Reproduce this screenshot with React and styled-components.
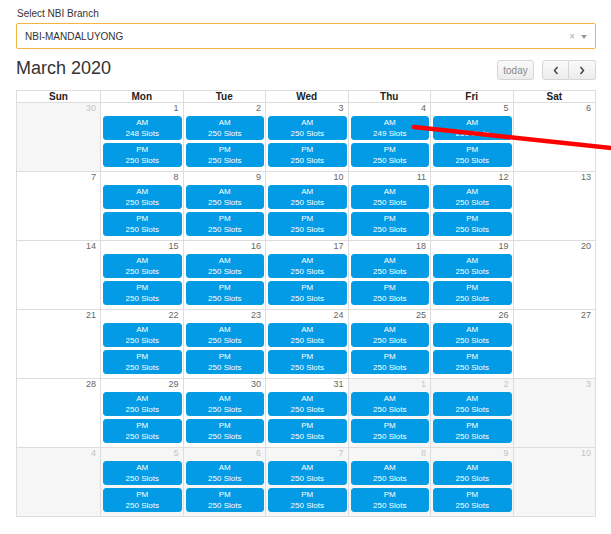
import React from "react";
import styled, { createGlobalStyle } from "styled-components";

const GlobalStyle = createGlobalStyle`
  html, body { margin: 0; padding: 0; background: #fff; }
  body { font-family: "Liberation Sans", Arial, sans-serif; color: #333; }
`;

const Page = styled.div`
  position: relative;
  width: 580px;
  padding: 8px 15px 0 16px;
  overflow: hidden;
`;

const Label = styled.div`
  font-size: 10px;
  line-height: 12px;
  color: #333;
  padding-left: 1px;
  margin-bottom: 3px;
`;

const SelectBox = styled.div`
  box-sizing: border-box;
  height: 26px;
  border: 1px solid #f5b342;
  border-radius: 2px;
  display: flex;
  align-items: center;
  padding: 0 8px;
  font-size: 10px;
  color: #333;
`;

const SelectValue = styled.span`
  flex: 1;
`;

const Clear = styled.span`
  color: #aaa;
  font-size: 10px;
  margin-right: 6px;
`;

const Caret = styled.span`
  width: 0;
  height: 0;
  border-left: 3px solid transparent;
  border-right: 3px solid transparent;
  border-top: 4px solid #999;
  margin-top: 1px;
`;

const Toolbar = styled.div`
  display: flex;
  align-items: flex-start;
  margin-top: 9px;
  height: 22px;
`;

const Title = styled.h2`
  flex: 1;
  margin: 0;
  font-size: 18px;
  line-height: 20px;
  font-weight: normal;
  color: #333;
`;

const Btn = styled.button`
  box-sizing: border-box;
  height: 20px;
  margin-top: 2px;
  padding: 0;
  width: ${(p) => (p.$wide ? "37px" : "27px")};
  font-family: "Liberation Sans", Arial, sans-serif;
  font-size: 10px;
  color: ${(p) => (p.$muted ? "#8a8a8a" : "#333")};
  background: linear-gradient(#fafafa, #ececec);
  border: 1px solid #d6d6d6;
  border-left-width: ${(p) => (p.$joined ? "0" : "1px")};
  border-radius: ${(p) => p.$radius || "3px"};
  display: flex;
  align-items: center;
  justify-content: center;
  cursor: pointer;
`;

const BtnGroup = styled.div`
  display: flex;
  margin-left: 8px;
`;

const Calendar = styled.div`
  margin-top: 10px;
  display: grid;
  grid-template-columns: 84px repeat(6, 1fr);
  border-top: 1px solid #ddd;
  border-left: 1px solid #ddd;
`;

const HeadCell = styled.div`
  border-right: 1px solid #ddd;
  border-bottom: 1px solid #ddd;
  text-align: center;
  font-weight: bold;
  font-size: 10px;
  line-height: 11px;
  color: #222;
`;

const DayCell = styled.div`
  box-sizing: border-box;
  height: 69px;
  border-right: 1px solid #ddd;
  border-bottom: 1px solid #ddd;
  background: ${(p) => (p.$other ? "#f6f6f6" : "#fff")};
  display: flex;
  flex-direction: column;
`;

const DayNum = styled.div`
  height: 13px;
  line-height: 11px;
  font-size: 9px;
  text-align: right;
  padding-right: 4px;
  color: ${(p) => (p.$other ? "#c4c4c4" : "#666")};
`;

const Slot = styled.div`
  box-sizing: border-box;
  height: 24px;
  margin: ${(p) => (p.$first ? "0" : "3px")} 1px 0 2px;
  padding: 1px 0;
  background: #039be5;
  border: 1px solid #069ee0;
  border-radius: 3px;
  color: #fff;
  text-align: center;
  font-size: 8px;
  line-height: 11px;
  display: flex;
  flex-direction: column;
  justify-content: center;
`;

const Arrow = styled.svg`
  position: absolute;
  left: 0;
  top: 0;
  pointer-events: none;
`;

const DAYS = ["Sun", "Mon", "Tue", "Wed", "Thu", "Fri", "Sat"];

const weeks = [
  [[30, 1], [1, 0], [2, 0], [3, 0], [4, 0], [5, 0], [6, 0]],
  [[7, 0], [8, 0], [9, 0], [10, 0], [11, 0], [12, 0], [13, 0]],
  [[14, 0], [15, 0], [16, 0], [17, 0], [18, 0], [19, 0], [20, 0]],
  [[21, 0], [22, 0], [23, 0], [24, 0], [25, 0], [26, 0], [27, 0]],
  [[28, 0], [29, 0], [30, 0], [31, 0], [1, 1], [2, 1], [3, 1]],
  [[4, 1], [5, 1], [6, 1], [7, 1], [8, 1], [9, 1], [10, 1]],
];

const special = { "0-1": 248, "0-4": 249 };

export default function App() {
  return (
    <>
      <GlobalStyle />
      <Page>
        <Label>Select NBI Branch</Label>
        <SelectBox>
          <SelectValue>NBI-MANDALUYONG</SelectValue>
          <Clear>×</Clear>
          <Caret />
        </SelectBox>
        <Toolbar>
          <Title>March 2020</Title>
          <Btn $wide $muted>today</Btn>
          <BtnGroup>
            <Btn $radius="3px 0 0 3px">
              <svg width="8" height="9" viewBox="0 0 8 9">
                <path d="M5.5 1 L2.5 4.5 L5.5 8" fill="none" stroke="#444" strokeWidth="1.5" />
              </svg>
            </Btn>
            <Btn $radius="0 3px 3px 0" $joined>
              <svg width="8" height="9" viewBox="0 0 8 9">
                <path d="M2.5 1 L5.5 4.5 L2.5 8" fill="none" stroke="#444" strokeWidth="1.5" />
              </svg>
            </Btn>
          </BtnGroup>
        </Toolbar>
        <Calendar>
          {DAYS.map((d) => (
            <HeadCell key={d}>{d}</HeadCell>
          ))}
          {weeks.map((week, wi) =>
            week.map(([n, other], di) => {
              const hasSlots = di >= 1 && di <= 5;
              const am = special[`${wi}-${di}`] || 250;
              return (
                <DayCell key={`${wi}-${di}`} $other={!!other}>
                  <DayNum $other={!!other}>{n}</DayNum>
                  {hasSlots && (
                    <>
                      <Slot $first>
                        <span>AM</span>
                        <span>{am} Slots</span>
                      </Slot>
                      <Slot>
                        <span>PM</span>
                        <span>250 Slots</span>
                      </Slot>
                    </>
                  )}
                </DayCell>
              );
            })
          )}
        </Calendar>
        <Arrow width="611" height="534" viewBox="0 0 611 534">
          <line x1="414" y1="127" x2="640" y2="151" stroke="#ff0000" strokeWidth="4.5" strokeLinecap="round" />
        </Arrow>
      </Page>
    </>
  );
}
